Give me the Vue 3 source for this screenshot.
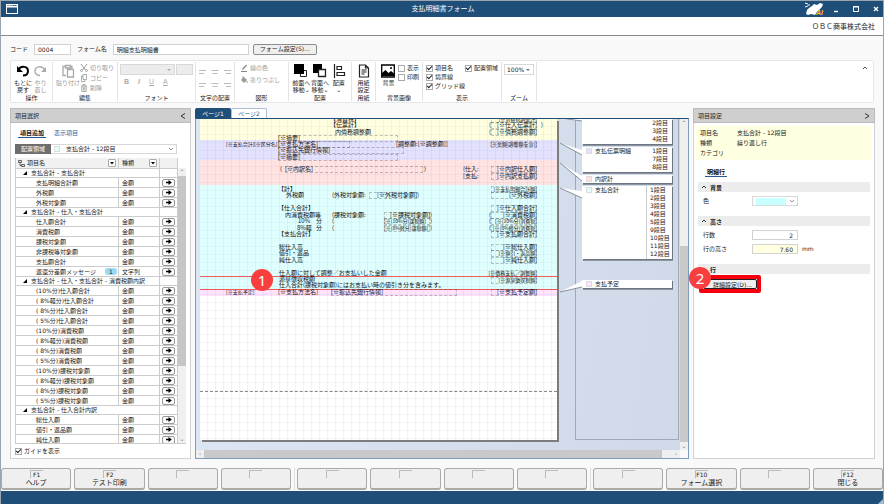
<script setup>
import { ref } from 'vue'

const rows = [
  { group: '支払合計 - 支払合計' },
  { name: '支払明細合計額' },
  { name: '外税額' },
  { name: '外税対象額' },
  { group: '支払合計 - 仕入・支払合計' },
  { name: '仕入額合計' },
  { name: '消費税額' },
  { name: '課税対象額' },
  { name: '非課税等対象額' },
  { name: '支払額合計' },
  { name: '返還分差額メッセージ', type: '文字列', count: 1 },
  { group: '支払合計 - 仕入・支払合計 - 消費税額内訳' },
  { name: '(10%分)仕入額合計' },
  { name: '( 8%軽分)仕入額合計' },
  { name: '( 8%分)仕入額合計' },
  { name: '( 5%分)仕入額合計' },
  { name: '(10%分)消費税額' },
  { name: '( 8%軽分)消費税額' },
  { name: '( 8%分)消費税額' },
  { name: '( 5%分)消費税額' },
  { name: '(10%分)課税対象額' },
  { name: '( 8%軽分)課税対象額' },
  { name: '( 8%分)課税対象額' },
  { name: '( 5%分)課税対象額' },
  { group: '支払合計 - 仕入合計内訳' },
  { name: '総仕入額' },
  { name: '値引・返品額' },
  { name: '純仕入額' }
]

// Form objects on the sheet: t text, x / y position, w frame width, r right aligned, s small
const R = 295
const W = 46
const items = [
  { t: '【消費税】', x: 134, y: -3 },
  { t: '[※消費税調整計]', x: R, y: -3, w: W, r: 1, s: 1 },
  { t: '【伝票計】', x: 134, y: 3 },
  { t: '(', x: 293, y: 3 },
  { t: '[※仕入伝票計]', x: R, y: 3, w: W, r: 1 },
  { t: ')', x: 345, y: 3 },
  { t: '内債務調整額', x: 139, y: 10 },
  { t: '(', x: 293, y: 10 },
  { t: '[※債務調整額]', x: R, y: 10, w: W, r: 1 },
  { t: '[※摘要]', x: 82, y: 16, w: 120 },
  { t: '[※支払合計]', x: 30, y: 22, s: 1 },
  { t: '[※区分名]', x: 58, y: 22, s: 1 },
  { t: '[※支払方法名]', x: 82, y: 22, w: 72 },
  { t: '[調整額:[※調整額]]', x: 200, y: 22 },
  { t: '[※金額(調整額を含)]', x: R, y: 22, w: W, r: 1, s: 1 },
  { t: '[※振込先銀行情報]', x: 82, y: 28, w: 126 },
  { t: '[※摘要]', x: 82, y: 35, w: 120 },
  { t: '(', x: 84, y: 47 },
  { t: '[※内訳名]', x: 89, y: 47, w: 138 },
  { t: ')', x: 228, y: 47 },
  { t: '(仕入:', x: 267, y: 47 },
  { t: '[支払:', x: 267, y: 54 },
  { t: '[※内訳仕入額]', x: R, y: 47, w: W, r: 1 },
  { t: '[※内訳支払額]', x: R, y: 54, w: W, r: 1 },
  { t: '【計】', x: 82, y: 67 },
  { t: '外税額', x: 90, y: 73 },
  { t: '(外税対象額:', x: 136, y: 73 },
  { t: '[※外税対象額]', x: 173, y: 73, w: 48, r: 1 },
  { t: ')', x: 221, y: 73 },
  { t: '[※支払明細合計額]', x: R, y: 67, w: W, r: 1, s: 1 },
  { t: '[※外税額]', x: R, y: 73, w: W, r: 1 },
  { t: '【仕入合計】', x: 82, y: 86 },
  { t: '内消費税額等', x: 89, y: 93 },
  { t: '(課税対象額:', x: 136, y: 93 },
  { t: '[※課税対象額]', x: 188, y: 93, w: 46, r: 1 },
  { t: ')', x: 234, y: 93 },
  { t: '10%', x: 102, y: 99 },
  { t: '分', x: 120, y: 99 },
  { t: '(', x: 136, y: 99 },
  { t: '[※(10%分)課税額]', x: 188, y: 99, w: 46, s: 1 },
  { t: ')', x: 234, y: 99 },
  { t: '8%軽', x: 101, y: 106 },
  { t: '分', x: 120, y: 106 },
  { t: '(', x: 136, y: 106 },
  { t: '[※(8%軽分)課税額]', x: 188, y: 106, w: 46, s: 1 },
  { t: ')', x: 234, y: 106 },
  { t: '【支払合計】', x: 82, y: 112 },
  { t: '[※仕入額合計]', x: R, y: 86, w: W, r: 1 },
  { t: '(', x: 293, y: 93 },
  { t: '[※消費税額]', x: R, y: 93, w: W, r: 1 },
  { t: '(', x: 293, y: 99 },
  { t: '[※(10%分)消費税]', x: R, y: 99, w: W, r: 1, s: 1 },
  { t: '(', x: 293, y: 106 },
  { t: '[※(8%軽分)消費税]', x: R, y: 106, w: W, r: 1, s: 1 },
  { t: '[※支払額合計]', x: R, y: 112, w: W, r: 1 },
  { t: '総仕入高', x: 83, y: 125 },
  { t: '値引・返品', x: 83, y: 131 },
  { t: '純仕入高', x: 83, y: 138 },
  { t: '[※総仕入額]', x: R, y: 125, w: W, r: 1 },
  { t: '[※値引・返品額]', x: R, y: 131, w: W, r: 1, s: 1 },
  { t: '[※純仕入額]', x: R, y: 138, w: W, r: 1 },
  { t: '仕入額に対して調整／お支払いした金額', x: 83, y: 151 },
  { t: '源泉徴収税額', x: 83, y: 157 },
  { t: '仕入合計(課税対象額)にはお支払い時の値引き分を含みます。', x: 83, y: 163 },
  { t: '[※債務支払／調整額]', x: R, y: 151, w: W, r: 1, s: 1 },
  { t: '[※源泉徴収税額]', x: R, y: 158, w: W, r: 1, s: 1 },
  { t: '[※支払予定]', x: 30, y: 170, s: 1 },
  { t: '[※支払方法名]', x: 82, y: 170 },
  { t: '[※振込先銀行情報]', x: 135, y: 170, w: 126 },
  { t: '[※支払予定額]', x: R, y: 170, w: W, r: 1 }
]
const place = (i) => ({ left: i.x + 'px', top: i.y + 'px', width: i.w ? i.w + 'px' : undefined })

const callouts = [
  { y: 0, h: 25, steps: ['2段目', '3段目', '4段目'] },
  { y: 28, h: 25, color: '#e2e2fd', title: '支払伝票明細', steps: ['1段目', '7段目', '8段目'] },
  { y: 56, h: 8, color: '#ffe1e1', title: '内訳計', steps: [] },
  {
    y: 67, h: 73, color: '#dfffff', title: '支払合計', split: true,
    steps: ['1段目', '2段目', '3段目', '4段目', '5段目', '9段目', '10段目', '11段目', '12段目']
  },
  { y: 161, h: 8, color: '#ffe3ff', title: '支払予定', steps: [] }
]

const keys = [
  [{ k: 'F1', t: 'ヘルプ' }, { k: 'F2', t: 'テスト印刷' }, {}, {}],
  [{}, {}, {}, {}],
  [{}, { k: 'F10', t: 'フォーム選択' }, {}, { k: 'F12', t: '閉じる' }]
]

const code = ref('0004')
const formName = ref('明細支払明細書')
const lineCount = ref('2')
const lineHeight = ref('7.60')
</script>

<template>
  <div class="window">
    <header class="titlebar">
      <svg class="appicon" viewBox="0 0 12 10"><rect x="0.5" y="0.5" width="11" height="9" fill="none" stroke="#fff" /><path d="M1 2.5h10" stroke="#fff" stroke-width="2" /><path d="M7 1.5h3" stroke="#1f4e79" stroke-dasharray="1 1" /></svg>
      <h1>支払明細書フォーム</h1>
      <div class="wincontrols">
        <svg class="mascot" viewBox="0 0 20 15">
          <path d="M1 12 L2 8 L4 6 L7 4 L9 2 L12 3 L15 1 L18 2 L17 5 L14 8 L12 10 L10 13 L6 12 L3 13 Z" fill="#fff" />
          <path d="M0 1l3 1M0 5l3-1M4 2v2" stroke="#fff" />
          <text x="11" y="13" class="ai">AI</text>
        </svg>
        <button aria-label="最小化"><svg viewBox="0 0 8 8"><path d="M2 6.500h4" stroke="#fff" stroke-width="1.4" /></svg></button>
        <button aria-label="最大化"><svg viewBox="0 0 8 8"><path d="M1.5 1.5h5v5h-5zM1 2h6" fill="none" stroke="#fff" /></svg></button>
        <button aria-label="閉じる"><svg viewBox="0 0 8 8"><path d="M2 2l4 4M6 2l-4 4" stroke="#fff" stroke-width="1.4" /></svg></button>
      </div>
    </header>
    <div class="company">ＯＢＣ商事株式会社</div>

    <div class="formrow">
      <label for="code">コード</label>
      <input id="code" v-model="code" class="code" />
      <label for="fname">フォーム名</label>
      <input id="fname" v-model="formName" class="fname" />
      <button class="push">フォーム設定(S)...</button>
    </div>

    <section class="ribbon">
      <div class="rg w-op">
        <div class="rbody tools">
          <button class="tool"><svg viewBox="0 0 14 14"><path d="M2.500 5.500C5 1.500 12 2 12 7c0 3-2 4.500-5 4.500" fill="none" stroke="#000" stroke-width="2" /><path d="M1 2v6h6z" /></svg>もとに<br />戻す</button>
          <button class="tool off"><svg viewBox="0 0 14 14"><path d="M11.500 5.500C9 1.500 2 2 2 7c0 3 2 4.500 5 4.500" fill="none" stroke="#aaa" stroke-width="1.400" /><path d="M13 3v5H8z" fill="#aaa" /></svg>やり<br />直し</button>
        </div>
        <h2>操作</h2>
      </div>
      <div class="rg w-edit">
        <div class="rbody tools">
          <button class="tool off"><svg viewBox="0 0 14 14"><path d="M5 11.500H2v-9h2.500M9.500 2.500H11V5M4.500 1.500h5v2.500h-5zM6.500 5.500h6v7.500h-6z" fill="none" stroke="#aaa" stroke-width="1.300" /></svg>貼り付け</button>
          <div class="stack">
            <button class="line off"><svg viewBox="0 0 8 8"><path d="M1 0l4.500 6M7 0L2.500 6" stroke="#999" fill="none" /><circle cx="1.500" cy="6.500" r="1" fill="none" stroke="#999" stroke-width=".8" /><circle cx="6.500" cy="6.500" r="1" fill="none" stroke="#999" stroke-width=".8" /></svg>切り取り</button>
            <button class="line off"><svg viewBox="0 0 8 8"><path d="M3 .5h3.500v5H3zM3 2H1.500v5.500H5V6" stroke="#999" fill="none" stroke-width=".8" /></svg>コピー</button>
            <button class="line off"><svg viewBox="0 0 8 8"><path d="M1 2h6M3 2V.5h2V2M1.800 2v5.500h4.400V2M3.300 3v3.500M4.700 3v3.500" stroke="#999" fill="none" stroke-width=".8" /></svg>削除</button>
          </div>
        </div>
        <h2>編集</h2>
      </div>
      <div class="rg w-font">
        <div class="rbody">
          <div class="fontsel">
            <span class="drop"><select disabled aria-label="フォント名"></select><svg viewBox="0 0 6 4"><path d="M1 1h4L3 3z" fill="#aaa" /></svg></span>
            <span class="drop size"><select disabled aria-label="サイズ"></select></span>
          </div>
          <div class="biu"><button><b>B</b></button><button><b><i>I</i></b></button><button><u>U</u></button><button><u>A</u></button></div>
        </div>
        <h2>フォント</h2>
      </div>
      <div class="rg w-align">
        <div class="rbody aligns">
          <button v-for="n in 6" :key="n" :aria-label="'配置' + n"><svg viewBox="0 0 8 6"><path :d="n % 3 === 1 ? 'M0 1.500h7M0 4.500h5' : n % 3 === 2 ? 'M0.500 1.500h7M1.500 4.500h5' : 'M1 1.500h7M3 4.500h5'" stroke="#bbb" /></svg></button>
        </div>
        <h2>文字の配置</h2>
      </div>
      <div class="rg w-shape">
        <div class="rbody stack">
          <button class="line off"><svg viewBox="0 0 8 8"><path d="M1 7.500h6" stroke="#888" /><path d="M2 6l.5-2L6 .5 7.200 1.600 4 5z" fill="#999" /></svg>線の色</button>
          <button class="line off"><svg viewBox="0 0 8 8"><path d="M1 4l3-3 3 3-3 3z" fill="#999" /><path d="M3 0v3M7 5v2" stroke="#999" /></svg>塗りつぶし</button>
        </div>
        <h2>図形</h2>
      </div>
      <div class="rg w-arr">
        <div class="rbody tools">
          <button class="tool"><svg viewBox="0 0 14 14"><path d="M6.500 6.500h6v6h-6z" fill="#fff" stroke="#222" /><path d="M0 0h10v10H0z" /></svg>前面へ<br />移動⌄</button>
          <button class="tool"><svg viewBox="0 0 14 14"><path d="M0 0h9v9H0z" /><path d="M5.500 5.500h7v7h-7z" fill="#fff" stroke="#222" stroke-width="1.300" /></svg>背面へ<br />移動⌄</button>
          <button class="tool"><svg viewBox="0 0 14 14"><path d="M2.500 0v14M5 2.500h4.500v3H5zM5 8.500h7.500v3H5z" fill="none" stroke="#222" stroke-width="1.200" /></svg>配置<br />⌄</button>
        </div>
        <h2>配置</h2>
      </div>
      <div class="rg w-paper">
        <div class="rbody tools">
          <button class="tool"><svg viewBox="0 0 14 14"><path d="M2.500 1h6l3 3v9h-9zM8.500 1v3h3M4.500 6h5M4.500 8h5M4.500 10h3" fill="none" stroke="#222" stroke-width="1.200" /></svg>用紙<br />設定</button>
        </div>
        <h2>用紙</h2>
      </div>
      <div class="rg w-bg">
        <div class="rbody tools">
          <button class="tool"><svg viewBox="0 0 14 14"><path d="M.7 1h12.600v12H.7z" fill="#fff" stroke="#000" stroke-width="1.300" /><path d="M1 12V9l3.500-3 3 3L10 7l3 2.500V12z" /><circle cx="10" cy="4" r="1" /></svg>背景</button>
          <div class="stack checks">
            <label><input type="checkbox" />表示</label>
            <label><input type="checkbox" />印刷</label>
          </div>
        </div>
        <h2>背景画像</h2>
      </div>
      <div class="rg w-view">
        <div class="rbody tools">
          <div class="stack checks">
            <label><input type="checkbox" checked />項目名</label>
            <label><input type="checkbox" checked />境界線</label>
            <label><input type="checkbox" checked />グリッド線</label>
          </div>
          <div class="stack checks">
            <label><input type="checkbox" checked />配置領域</label>
          </div>
        </div>
        <h2>表示</h2>
      </div>
      <div class="rg w-zoom">
        <div class="rbody"><span class="drop zoomsel"><select aria-label="ズーム"><option>100%</option></select><svg viewBox="0 0 6 4"><path d="M1 1h4L3 3z" fill="#777" /></svg></span></div>
        <h2>ズーム</h2>
      </div>
      <button class="collapse" aria-label="折りたたむ"><svg viewBox="0 0 6 4"><path d="M1 3l2-2 2 2" fill="none" stroke="#555" /></svg></button>
    </section>

    <main>
      <aside class="panel items">
        <div class="phead"><h2>項目選択</h2><button aria-label="閉じる"><svg viewBox="0 0 6 8"><path d="M5 1.500L1 4l4 2.500" fill="none" stroke="#333" /></svg></button></div>
        <div class="lbody">
          <nav class="subtabs"><button class="on">項目追加</button><button>表示項目</button></nav>
          <div class="region">
            <label for="region">配置領域</label>
            <span class="drop"><i class="swatch"></i><select id="region"><option>支払合計 - 12段目</option></select><svg viewBox="0 0 6 4"><path d="M1 1l2 2 2-2" fill="none" stroke="#777" stroke-width=".8" /></svg></span>
          </div>
          <div class="listwrap">
            <table>
              <colgroup><col /><col class="ctype" /><col class="cbtn" /></colgroup>
              <thead>
                <tr>
                  <th><span class="th"><svg class="tree" viewBox="0 0 7 7"><path d="M.5.500h3v2h-3zM3.500 4.500h3v2h-3zM2 2.500v3h1.500" fill="#ddd" stroke="#444" stroke-width=".8" /></svg>項目名<button aria-label="絞り込み"><svg viewBox="0 0 6 6"><path d="M1 2h4L3 4.500z" /></svg></button></span></th>
                  <th><span class="th">種類<button aria-label="絞り込み"><svg viewBox="0 0 6 6"><path d="M1 2h4L3 4.500z" /></svg></button></span></th>
                  <th></th>
                </tr>
              </thead>
              <tbody>
                <tr v-for="(r, i) in rows" :key="i" :class="{ group: r.group }">
                  <template v-if="r.group">
                    <td colspan="2"><svg class="tri" viewBox="0 0 4 4"><path d="M4 0v4H0z" /></svg>{{ r.group }}</td>
                    <td></td>
                  </template>
                  <template v-else>
                    <td class="name"><span>{{ r.name }}<em v-if="r.count">{{ r.count }}</em></span></td>
                    <td class="type">{{ r.type || '金額' }}</td>
                    <td class="act"><button :aria-label="r.name + 'を追加'"><svg viewBox="0 0 8 6"><path d="M1 2h3V0l4 3-4 3V4H1z" /></svg></button></td>
                  </template>
                </tr>
              </tbody>
            </table>
            <div class="vbar"><span>⌃</span><i></i><span>⌄</span></div>
          </div>
          <label class="guide"><input type="checkbox" checked />ガイドを表示</label>
        </div>
      </aside>

      <section class="center">
        <nav class="pages"><button class="on">ページ1</button><button>ページ2</button></nav>
        <div class="editor">
          <div class="viewport">
            <div class="sheet">
              <div class="band b1"></div><div class="band b2"></div><div class="band b3"></div><div class="band b4"></div><div class="band b5"></div>
              <div class="band b6"></div>
            </div>
            <div class="selected"></div>
            <span v-for="(it, i) in items" :key="i" class="item" :class="{ framed: it.w, right: it.r, small: it.s }" :style="place(it)">{{ it.t }}</span>
            <div class="lane"></div>
            <div v-for="(c, i) in callouts" :key="'c' + i" class="callout" :class="{ split: c.split }" :style="{ top: c.y + 'px', height: c.h + 'px' }">
              <i v-if="c.color" :style="{ background: c.color }"></i><b>{{ c.title }}</b>
              <ul v-if="c.steps.length"><li v-for="s in c.steps" :key="s">{{ s }}</li></ul>
            </div>
            <svg class="tails" viewBox="0 0 26 180">
              <g fill="#fff"><path d="M2 0L24 0V2z" /><path d="M2 24L24 31V36z" /><path d="M2 44L24 57V62z" /><path d="M2 69L24 72V79z" /><path d="M2 173L24 162V168z" /></g>
              <path d="M2 -1L24 2M2 24L24 36M2 44L24 62M2 69L24 79M2 173L24 168" stroke="#8a919b" fill="none" />
            </svg>
            <span class="marker m1">1</span>
          </div>
          <div class="vscroll"><span>⌃</span><i></i><span>⌄</span></div>
          <div class="hscroll"><span>‹</span><i></i><span>›</span></div>
        </div>
      </section>

      <aside class="panel">
        <div class="phead"><h2>項目設定</h2><button aria-label="閉じる"><svg viewBox="0 0 6 8"><path d="M1 1.500L5 4 1 6.500" fill="none" stroke="#333" /></svg></button></div>
        <dl class="info">
          <dt>項目名</dt><dd>支払合計 - 12段目</dd>
          <dt>種類</dt><dd>繰り返し行</dd>
          <dt>カテゴリ</dt><dd></dd>
        </dl>
        <div class="settings">
          <nav class="subtabs"><button class="on">明細行</button></nav>
          <h3><svg viewBox="0 0 6 4"><path d="M1 3l2-2 2 2" fill="none" stroke="#333" /></svg>背景</h3>
          <div class="field"><label for="color">色</label><span class="drop colorsel"><i></i><select id="color"><option></option></select><svg viewBox="0 0 6 4"><path d="M1 1l2 2 2-2" fill="none" stroke="#777" stroke-width=".8" /></svg></span></div>
          <h3><svg viewBox="0 0 6 4"><path d="M1 3l2-2 2 2" fill="none" stroke="#333" /></svg>高さ</h3>
          <div class="field"><label for="lines">行数</label><input id="lines" v-model="lineCount" /></div>
          <div class="field"><label for="lh">行の高さ</label><input id="lh" v-model="lineHeight" class="yellow" />mm</div>
          <h3><svg viewBox="0 0 6 4"><path d="M1 3l2-2 2 2" fill="none" stroke="#333" /></svg>行</h3>
          <div class="callbox"><button class="push">詳細設定(D)...</button><span class="marker m2">2</span></div>
        </div>
      </aside>
    </main>

    <footer class="keys">
      <div v-for="(g, gi) in keys" :key="gi" class="kgroup">
        <button v-for="(k, i) in g" :key="i"><kbd>{{ k.k }}</kbd><span>{{ k.t }}</span></button>
      </div>
    </footer>
    <div class="status"><svg viewBox="0 0 6 6"><path d="M6 0v6H0z" fill="#a9bccd" /></svg></div>
  </div>
</template>

<style>
body { margin: 0; }
</style>

<style scoped>
* { box-sizing: border-box; }
.window {
  min-height: 100vh; display: flex; flex-direction: column; background: #f9f9f9; color: #222;
  border: 1px solid #9aa5b0; border-bottom-color: #7893ad;
  font-family: "DejaVu Sans", "Noto Sans CJK JP", sans-serif; font-size: 6px; line-height: 8px;
}
h1, h2, h3, ul, dl, dd { margin: 0; padding: 0; font-size: inherit; font-weight: 400; }
button, input, select { font: inherit; color: inherit; margin: 0; padding: 0; border: 0; background: none; border-radius: 0; }
button { display: block; white-space: nowrap; }
svg { display: block; flex: none; }
ul { list-style: none; }

.titlebar { height: 16px; background: #1f4e79; color: #fff; display: grid; grid-template-columns: 1fr auto 1fr; align-items: center; padding: 0 3px 0 5px; }
.titlebar h1 { font-size: 7px; }
.appicon { width: 12px; height: 10px; }
.wincontrols { display: flex; justify-content: flex-end; align-items: center; gap: 12px; }
.wincontrols svg { width: 8px; height: 8px; }
.wincontrols .mascot { width: 20px; height: 15px; margin-right: -5px; overflow: visible; }
.ai { font: italic bold 7px "Liberation Sans", sans-serif; fill: #ffc21c; }
.company { height: 19px; background: #fff; border-bottom: 1px solid #8a8a8a; text-align: right; font-family: "Noto Sans CJK JP", sans-serif; font-size: 7px; line-height: 18px; padding-right: 8px; }

.formrow { display: flex; align-items: center; padding: 6px 9px 4px; gap: 6px; height: 24px; }
.formrow input { border: 1px solid #d2d2d2; background: #fff; height: 11px; padding: 0 3px; }
.code { width: 37px; }
.fname { width: 136px; }
.push { border: 1px solid #8c8c8c; border-radius: 2px; background: #efefef; height: 11px; line-height: 8px; padding: 0 4px; }
.formrow .push { margin-left: -2px; width: 64px; }

.ribbon { margin: 0 9px; height: 43px; border: 1px solid #e6e6e6; border-radius: 2px; background: #fff; display: flex; }
.rg { border-right: 1px solid #e4e4e4; margin: 1px 0; padding: 2px 3px 0; display: flex; flex-direction: column; flex: none; }
.rg h2 { text-align: center; line-height: 7px; }
.rbody { height: 31px; }
.w-op { width: 42px; } .w-edit { width: 65px; } .w-font { width: 78px; } .w-align { width: 39px; } .w-shape { width: 54px; }
.w-arr { width: 63px; } .w-paper { width: 24px; } .w-bg { width: 47px; } .w-view { width: 79px; } .w-zoom { width: 35px; }
.tools { display: flex; justify-content: space-between; }
.tool { line-height: 7px; text-align: center; flex: 1; display: flex; flex-direction: column; align-items: center; justify-content: flex-start; }
.tool svg { width: 14px; height: 14px; margin-bottom: 1px; }
.off { color: #999; }
.stack { display: flex; flex-direction: column; gap: 2px; }
.line { display: flex; align-items: center; gap: 2px; }
.line svg { width: 8px; height: 8px; }
.w-shape .stack { gap: 4px; padding-left: 2px; }
.fontsel { display: flex; gap: 1px; margin: 0 -1px; }
.fontsel .drop { height: 11px; background: #ececec; flex: 1; }
.fontsel .size { flex: 0 0 17px; }
.biu { display: flex; gap: 9px; padding: 3px 3px; color: #aaa; font: 7px/8px "Liberation Sans", sans-serif; }
.aligns { display: grid; grid-template-columns: repeat(3, 8px); justify-content: space-between; grid-auto-rows: 13px; padding-top: 1px; }
.aligns svg { width: 8px; height: 6px; }
.checks { gap: 1px; }
.checks label, .guide { display: flex; align-items: center; gap: 2px; white-space: nowrap; }
input[type="checkbox"] { appearance: none; width: 7px; height: 7px; border: 1px solid #aaa; background: #fff; display: grid; place-items: center; }
input[type="checkbox"]:checked::after { content: ""; width: 4px; height: 2px; border: solid #222; border-width: 0 0 1px 1px; transform: rotate(-45deg); margin-bottom: 1px; }
.drop { display: flex; align-items: center; border: 1px solid #d8d8d8; background: #fff; height: 10px; padding: 0 2px; }
.drop select { flex: 1; min-width: 0; appearance: none; height: 8px; line-height: 8px; }
.drop svg { width: 6px; height: 4px; }
.zoomsel { margin: 0 -1px; height: 11px; }
.collapse { margin: 4px 5px 0 auto; height: 6px; }
.collapse svg { width: 6px; height: 4px; }

main { flex: 1; display: flex; gap: 4px; padding: 5px 8px 0 9px; }
.panel { width: 182px; flex: none; border: 1px solid #d2d2d2; background: #fff; }
.items { width: 181px; }
.phead { display: flex; justify-content: space-between; align-items: center; height: 15px; background: #cfcfcf; border: 1px solid #bcbcbc; margin: -1px -1px 0; padding: 0 4px; }
.phead svg { width: 6px; height: 8px; }
.lbody { padding: 5px 4px 0; }
.subtabs { display: flex; gap: 6px; padding-left: 3px; height: 16px; align-items: flex-start; }
.subtabs button { padding: 0 2px; color: #2268a8; height: 10px; }
.subtabs .on { color: #111; font-weight: 700; border-bottom: 1px solid #245a91; }
.region { display: flex; margin-right: 9px; }
.region label { width: 36px; background: #6d6d6d; color: #fff; text-align: center; height: 10px; line-height: 9px; }
.region .drop { flex: 1; border-left: 0; }
.swatch { width: 6px; height: 6px; background: #dfffff; border: 1px solid #ddd; margin: 0 6px 0 1px; }
.listwrap { display: flex; margin-top: 4px; height: 286px; overflow: hidden; border-bottom: 1px solid #ccc; }
table { flex: 1; border-collapse: separate; border-spacing: 0; table-layout: fixed; height: 0; border-left: 1px solid #ccc; width: 163px; }
.ctype { width: 41px; } .cbtn { width: 18px; }
th, td { padding: 0; border-bottom: 1px solid #ccc; border-right: 1px solid #ccc; white-space: nowrap; overflow: hidden; font-weight: 400; line-height: 8px; }
th { background: #f1f1f1; height: 11px; }
.th { display: flex; align-items: center; padding: 0 2px; gap: 2px; }
th + th .th { padding-left: 3px; }
.th button { margin-left: auto; border: 1px solid #aaa; border-radius: 1px; background: #fff; }
.tree { width: 7px; height: 7px; }
.th button svg { width: 6px; height: 6px; }
td { height: 10px; }
.group td { height: 9px; }
.tri { width: 4px; height: 4px; display: inline-block; margin: 0 4px 0 7px; }
td.name { padding-left: 20px; }
.name span { display: flex; justify-content: space-between; }
.name em { font-style: normal; background: #9bd8f5; width: 12px; border-radius: 3px; text-align: center; height: 7px; line-height: 7px; margin-right: 1px; }
td.type { padding-left: 3px; }
.act button { width: 13px; height: 8px; margin-left: 2px; border: 1px solid #999; border-radius: 2px; background: #fafafa; display: grid; place-items: center; }
.act svg { width: 7px; height: 5px; }
.vbar { width: 8px; margin-top: 10px; display: flex; flex-direction: column; background: #f0f0f0; }
.vbar i { background: #c6c6c6; height: 190px; }
.vbar span, .vscroll span, .hscroll span { height: 8px; line-height: 8px; text-align: center; color: #777; }
.vbar span:last-child, .vscroll span:last-child { margin-top: auto; }
.guide { margin-top: 3px; gap: 2px; }

.center { flex: 1; min-width: 0; display: flex; flex-direction: column; }
.pages { display: flex; height: 10px; }
.pages button { width: 36px; background: #fff; color: #2268a8; border: 1px solid #a9bfd8; border-bottom: 0; border-radius: 2px 2px 0 0; line-height: 8px; }
.pages .on { background: #1f4e79; border-color: #1f4e79; color: #fff; }
.editor { flex: 1; display: grid; grid-template: minmax(331px, 1fr) 8px / 1fr 8px; border: 1px solid #7e9cbd; border-top-color: #1f4e79; }
.viewport { position: relative; overflow: hidden; background: linear-gradient(100deg, #dce6f4, #cfd9e8); }
.sheet { position: absolute; left: 4px; top: 0; width: 357px; height: 321px; background: #fff; box-shadow: 2px 2px 0 #7c7c7c; }
.sheet::after { content: ""; position: absolute; inset: 0; background: repeating-linear-gradient(90deg, transparent 0 7px, rgba(90, 100, 130, .08) 7px 8px), repeating-linear-gradient(transparent 0 7px, rgba(90, 100, 130, .06) 7px 8px); }
.b1 { height: 21px; background: #ffffe0; }
.b2 { height: 20px; background: #e2e2ff; }
.b3 { height: 25px; background: #ffe2e2; }
.b4 { height: 104px; background: #dfffff; }
.b5 { height: 7px; background: #ffe3ff; }
.b6 { height: 96px; border-bottom: 1px dashed #888; }
.selected { position: absolute; left: 4px; top: 157px; width: 357px; height: 14px; border: solid #f05a5a; border-width: 1px 0; }
.item { position: absolute; font-family: "Noto Sans CJK JP", sans-serif; font-size: 6px; line-height: 6px; height: 7px; white-space: pre; color: #111; }
.framed { outline: 1px dashed rgba(60, 60, 60, .3); outline-offset: -1px; }
.right { text-align: right; display: flex; justify-content: flex-end; }
.small { font-size: 5px; }
.lane { position: absolute; left: 379px; top: -1px; width: 104px; height: 322px; border: 1px solid #9da9ba; }
.callout { position: absolute; left: 386px; width: 90px; background: #fff; box-shadow: 1px 1px 0 #6d7580, 1px 2px 0 #8d95a0; padding: 0 4px; display: flex; gap: 3px; white-space: nowrap; }
.callout i { width: 6px; height: 6px; border: 1px solid #ddd; margin-top: 1px; flex: none; }
.callout b { font-weight: 400; }
.callout ul { margin-left: auto; }
.split { padding-right: 1px; }
.split ul { border-left: 1px solid #ccc; padding-left: 3px; width: 25px; }
.tails { position: absolute; left: 362px; top: 0; width: 26px; height: 180px; }
.marker { position: absolute; width: 22px; height: 22px; border-radius: 50%; background: #f73f3f; color: #fff; font: 15px/22px "Noto Sans", sans-serif; text-align: center; }
.m1 { left: 55px; top: 150px; }
.vscroll { background: #efefef; display: flex; flex-direction: column; }
.vscroll i { background: #c9c9c9; flex: 1; margin-top: 119px; }
.hscroll { background: #efefef; display: flex; }
.hscroll span { width: 8px; }
.hscroll i { background: #c9c9c9; flex: 1; margin-right: 10px; }

.info { display: grid; grid-template-columns: 37px 1fr; grid-auto-rows: 10px; background: #ffffe1; margin: 3px 2px 0; padding: 2px 4px; line-height: 10px; }
.settings { padding: 5px 4px 0; }
.settings .subtabs { padding-left: 7px; height: 17px; padding-top: 2px; }
.settings h3 { background: #ececec; height: 10px; line-height: 9px; display: flex; align-items: center; gap: 3px; padding-left: 3px; font-weight: 700; }
.settings h3 svg { width: 6px; height: 4px; }
.field { display: flex; align-items: center; padding: 4px 0 0 5px; gap: 4px; }
.field label { width: 45px; }
.field input { width: 46px; height: 10px; border: 1px solid #d2d2d2; text-align: right; padding: 0 4px; }
.field .yellow { background: #ffffe1; }
.colorsel { width: 46px; }
.colorsel i { width: 30px; height: 7px; background: #c8ffff; margin-left: 1px; }
.colorsel select { width: 4px; }
.field + h3 { margin-top: 10px; }
.callbox { position: relative; width: 62px; border: 4px solid #f5000c; border-radius: 2px; margin: 1px 0 0 1px; height: 18px; }
.callbox .push { width: 54px; height: 10px; border: 1px solid #222; line-height: 7px; text-align: right; padding: 0 4px 0 0; }
.m2 { left: -14px; top: -12px; }

.keys { display: flex; gap: 3px; padding: 9px 0 0; }
.kgroup { flex: 1; display: flex; gap: 3px; }
.kgroup + .kgroup { border-left: 1px solid #ddd; padding-left: 2px; }
.keys button { flex: 1; height: 22px; border: 1px solid #aaa; border-bottom-width: 2px; border-radius: 3px; background: #efefef; display: flex; flex-direction: column; align-items: center; }
kbd { font: inherit; min-width: 13px; height: 8px; line-height: 7px; margin-top: 1px; border: solid #bbb; border-width: 1px 0 0 1px; text-align: center; }
.keys span { font-size: 7px; line-height: 10px; }
.status { height: 14px; margin-top: 1px; background: #1f4e79; display: flex; align-items: flex-end; justify-content: flex-end; }
.status svg { width: 6px; height: 6px; }
</style>
